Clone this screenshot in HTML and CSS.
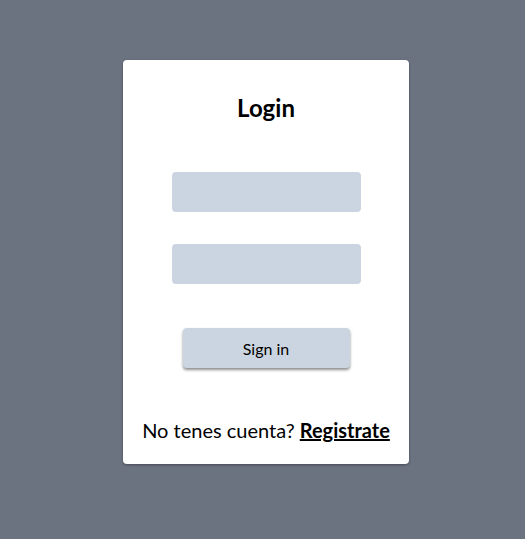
FILE: index.html
```html
<!DOCTYPE html>
<html>
<head>
<meta charset="utf-8">
<link rel="stylesheet" href="styles.css">
</head>
<body>
<main class="page">
  <form class="card">
    <h1 class="title">Login</h1>
    <input class="field field-first" type="text">
    <input class="field field-second" type="password">
    <button class="btn" type="button">Sign in</button>
    <p class="footer">No tenes cuenta? <a class="link" href="#">Registrate</a></p>
  </form>
</main>
</body>
</html>
```

FILE: styles.css
```css
html, body {
  margin: 0;
  padding: 0;
}
body {
  background: #6b7280;
  font-family: Lato, "Noto Sans", sans-serif;
  color: #000;
}
.page {
  height: 539px;
  display: flex;
  justify-content: center;
  padding-top: 60px;
  box-sizing: border-box;
  padding-left: 7px;
}
.card {
  width: 286px;
  height: 404px;
  background: #fff;
  border-radius: 4px;
  box-shadow: 0 1px 3px rgba(0,0,0,0.2), 0 1px 2px rgba(0,0,0,0.15);
  display: flex;
  flex-direction: column;
  align-items: center;
  box-sizing: border-box;
  padding-top: 32px;
  margin: 0;
}
.title {
  margin: 0;
  font-size: 24px;
  line-height: 32px;
  font-weight: 700;
}
.field {
  display: block;
  width: 189px;
  height: 40px;
  border: none;
  border-radius: 4px;
  background: #cbd5e1;
  padding: 0;
  margin: 0;
  box-sizing: border-box;
}
.field-first {
  margin-top: 48px;
}
.field-second {
  margin-top: 32px;
}
.btn {
  margin-top: 44px;
  width: 167px;
  height: 40px;
  border: none;
  border-radius: 4px;
  background: #cbd5e1;
  font-family: Lato, "Noto Sans", sans-serif;
  font-size: 16px;
  color: #000;
  box-shadow: 0 2px 3px rgba(0,0,0,0.45);
  padding: 0;
}
.footer {
  margin: 48px 0 0;
  font-size: 20px;
  line-height: 28px;
}
.link {
  color: #000;
  font-weight: 700;
  text-decoration: underline;
}
```
